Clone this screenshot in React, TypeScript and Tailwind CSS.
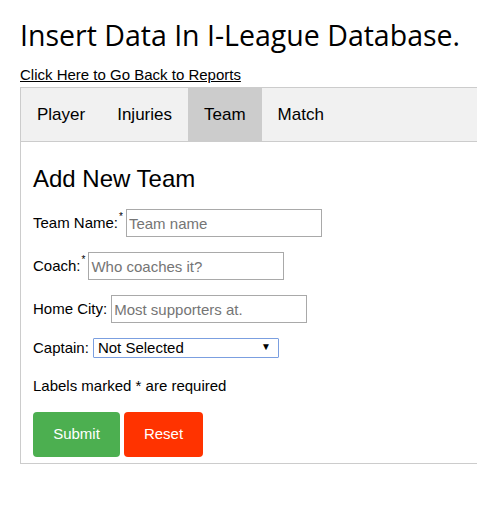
import React from "react";

export default function App() {
  const tabs = ["Player", "Injuries", "Team", "Match"];
  return (
    <div className="w-[477px] h-[514px] overflow-hidden bg-white text-black font-['Liberation_Sans',Arial,sans-serif]">
      <div className="pl-5">
        <h1 className="pt-[18px] h-[66px] text-[28.5px] leading-[34px] font-['Open_Sans','Noto_Sans',sans-serif]">
          Insert Data In I-League Database.
        </h1>
        <a href="#" className="block text-[15px] leading-[17px] underline h-[21px]">
          Click Here to Go Back to Reports
        </a>
        <div className="-mr-6">
          <div className="flex h-[55px] border border-[#ccc] bg-[#f1f1f1]">
            {tabs.map((t) => (
              <button
                key={t}
                className={`h-full px-4 text-[17px] leading-[20px] ${t === "Team" ? "bg-[#ccc]" : ""}`}
              >
                {t}
              </button>
            ))}
          </div>
          <div className="border border-t-0 border-[#ccc] px-3 pt-[6px] pb-[6px]">
            <h3 className="mt-[17px] text-[24px] leading-[28px] h-[28px]">Add New Team</h3>
            <div className="mt-[16px] flex items-center h-[28px] text-[15px]">
              <span>Team Name:</span>
              <span className="self-start mt-[3px] ml-[1px] mr-[3px] text-[10px] leading-[10px]">*</span>
              <input
                placeholder="Team name"
                className="w-[196px] h-[28px] border border-[#a9a9a9] px-[2px] text-[15px] placeholder:text-[#757575] outline-none"
              />
            </div>
            <div className="mt-[15px] flex items-center h-[28px] text-[15px]">
              <span>Coach:</span>
              <span className="self-start mt-[3px] ml-[1px] mr-[3px] text-[10px] leading-[10px]">*</span>
              <input
                placeholder="Who coaches it?"
                className="w-[196px] h-[28px] border border-[#a9a9a9] px-[2px] text-[15px] placeholder:text-[#757575] outline-none"
              />
            </div>
            <div className="mt-[15px] flex items-center h-[28px] text-[15px]">
              <span className="mr-[4px]">Home City:</span>
              <input
                placeholder="Most supporters at."
                className="w-[196px] h-[28px] border border-[#a9a9a9] px-[2px] text-[15px] placeholder:text-[#757575] outline-none"
              />
            </div>
            <div className="mt-[15px] flex items-center h-[21px] text-[15px]">
              <span className="mr-[4px]">Captain:</span>
              <div className="relative">
                <select className="appearance-none w-[186px] h-[20px] border border-[#7b9fe0] rounded-[1px] pl-[4px] text-[15px] leading-[18px] bg-white outline-none">
                  <option>Not Selected</option>
                </select>
                <span className="absolute right-[8px] top-[3px] text-[10px] leading-[14px] pointer-events-none">▼</span>
              </div>
            </div>
            <p className="mt-[18px] text-[15px] leading-[17px] h-[17px]">Labels marked * are required</p>
            <div className="mt-[18px] flex gap-1">
              <button className="w-[87px] h-[45px] rounded-[4px] bg-[#4caf50] text-white text-[15px]">Submit</button>
              <button className="w-[79px] h-[45px] rounded-[4px] bg-[#ff3300] text-white text-[15px]">Reset</button>
            </div>
          </div>
        </div>
      </div>
    </div>
  );
}
